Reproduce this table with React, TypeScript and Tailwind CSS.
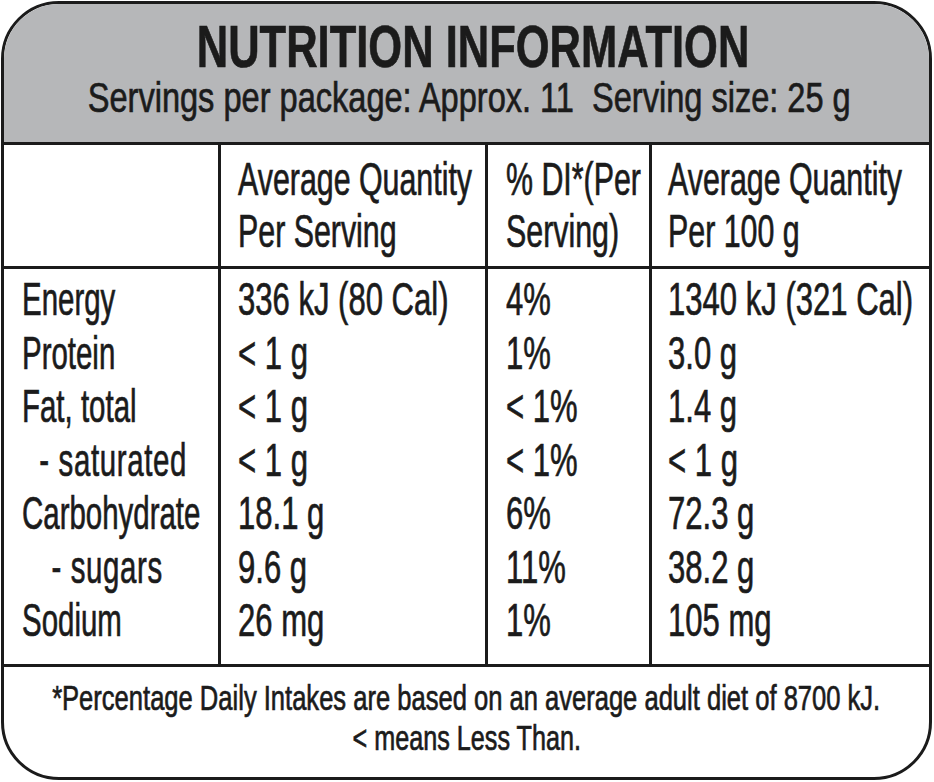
import React from 'react';

type Row = { label: string; indent?: string; serving: string; di: string; per100: string };

const rows: Row[] = [
  { label: 'Energy', serving: '336 kJ (80 Cal)', di: '4%', per100: '1340 kJ (321 Cal)' },
  { label: 'Protein', serving: '< 1 g', di: '1%', per100: '3.0 g' },
  { label: 'Fat, total', serving: '< 1 g', di: '< 1%', per100: '1.4 g' },
  { label: '- saturated', indent: 'pl-[27px] tracking-[1px]', serving: '< 1 g', di: '< 1%', per100: '< 1 g' },
  { label: 'Carbohydrate', serving: '18.1 g', di: '6%', per100: '72.3 g' },
  { label: '- sugars', indent: 'pl-[46px] tracking-[1px]', serving: '9.6 g', di: '11%', per100: '38.2 g' },
  { label: 'Sodium', serving: '26 mg', di: '1%', per100: '105 mg' },
];

// condensed look: Liberation Sans squeezed horizontally
const squeeze = 'w-max shrink-0 whitespace-nowrap origin-left scale-x-[0.675]';
const cell = 'border-r-[3px] border-[#1b1b1b]';

function HeadCell({ lines, className }: { lines: string[]; className: string }) {
  return (
    <div className={className}>
      <div className="w-max shrink-0 whitespace-nowrap origin-left scale-x-[0.66] text-[46px] leading-[52px]">
        {lines.map((l) => (
          <div key={l}>{l}</div>
        ))}
      </div>
    </div>
  );
}

export default function App() {
  return (
    <div className="w-[934px] h-[782px] bg-white pt-[1px] pl-[1px] font-['Liberation_Sans',Arial,sans-serif] text-[#1b1b1b] [-webkit-text-stroke:0.7px_#1b1b1b]">
      <div className="w-[931px] h-[779px] rounded-[58px] border-[3px] border-[#1b1b1b] overflow-hidden flex flex-col">
        {/* title band */}
        <div className="h-[141px] shrink-0 bg-[#b6b7b9] border-b-[3px] border-[#1b1b1b] pt-[13px] flex flex-col items-center">
          <div className="flex justify-center w-full pl-[14px]">
            <div className="w-max shrink-0 whitespace-nowrap origin-center scale-x-[0.725] text-[60px] leading-[60px] font-bold">
              NUTRITION INFORMATION
            </div>
          </div>
          <div className="flex justify-center w-full pl-[6px]">
            <div className="w-max shrink-0 whitespace-pre origin-center scale-x-[0.775] text-[42px] leading-[42px]">
              {'Servings per package: Approx. 11  Serving size: 25 g'}
            </div>
          </div>
        </div>

        {/* column headings */}
        <div className="h-[124px] shrink-0 grid grid-cols-[217px_267px_164px_1fr] border-b-[3px] border-[#1b1b1b]">
          <div className={cell} />
          <HeadCell className={`${cell} pl-[17px] pt-[8px]`} lines={['Average Quantity', 'Per Serving']} />
          <HeadCell className={`${cell} pl-[18px] pt-[8px]`} lines={['% DI*(Per', 'Serving)']} />
          <HeadCell className="pl-[16px] pt-[8px]" lines={['Average Quantity', 'Per 100 g']} />
        </div>

        {/* values */}
        <div className="h-[398px] shrink-0 grid grid-cols-[217px_267px_164px_1fr] border-b-[3px] border-[#1b1b1b] text-[46px] leading-[53.5px]">
          <div className={`${cell} pl-[18px] pt-[4px]`}>
            <div className="w-max whitespace-pre origin-left scale-x-[0.64]">
              {rows.map((r) => (
                <div key={r.label} className={r.indent}>
                  {r.label}
                </div>
              ))}
            </div>
          </div>
          <div className={`${cell} pl-[17px] pt-[4px]`}>
            <div className={squeeze}>
              {rows.map((r) => (
                <div key={r.label}>{r.serving}</div>
              ))}
            </div>
          </div>
          <div className={`${cell} pl-[18px] pt-[4px]`}>
            <div className={squeeze}>
              {rows.map((r) => (
                <div key={r.label}>{r.di}</div>
              ))}
            </div>
          </div>
          <div className="pl-[16px] pt-[4px]">
            <div className={squeeze}>
              {rows.map((r) => (
                <div key={r.label}>{r.per100}</div>
              ))}
            </div>
          </div>
        </div>

        {/* footnote */}
        <div className="flex-1 pt-[11px] flex flex-col items-center text-[35px] leading-[40px]">
          <div className="flex justify-center w-full">
            <div className="w-max shrink-0 whitespace-nowrap origin-center scale-x-[0.73]">
              *Percentage Daily Intakes are based on an average adult diet of 8700 kJ.
            </div>
          </div>
          <div className="flex justify-center w-full">
            <div className="w-max shrink-0 whitespace-nowrap origin-center scale-x-[0.72]">
              {'< means Less Than.'}
            </div>
          </div>
        </div>
      </div>
    </div>
  );
}
